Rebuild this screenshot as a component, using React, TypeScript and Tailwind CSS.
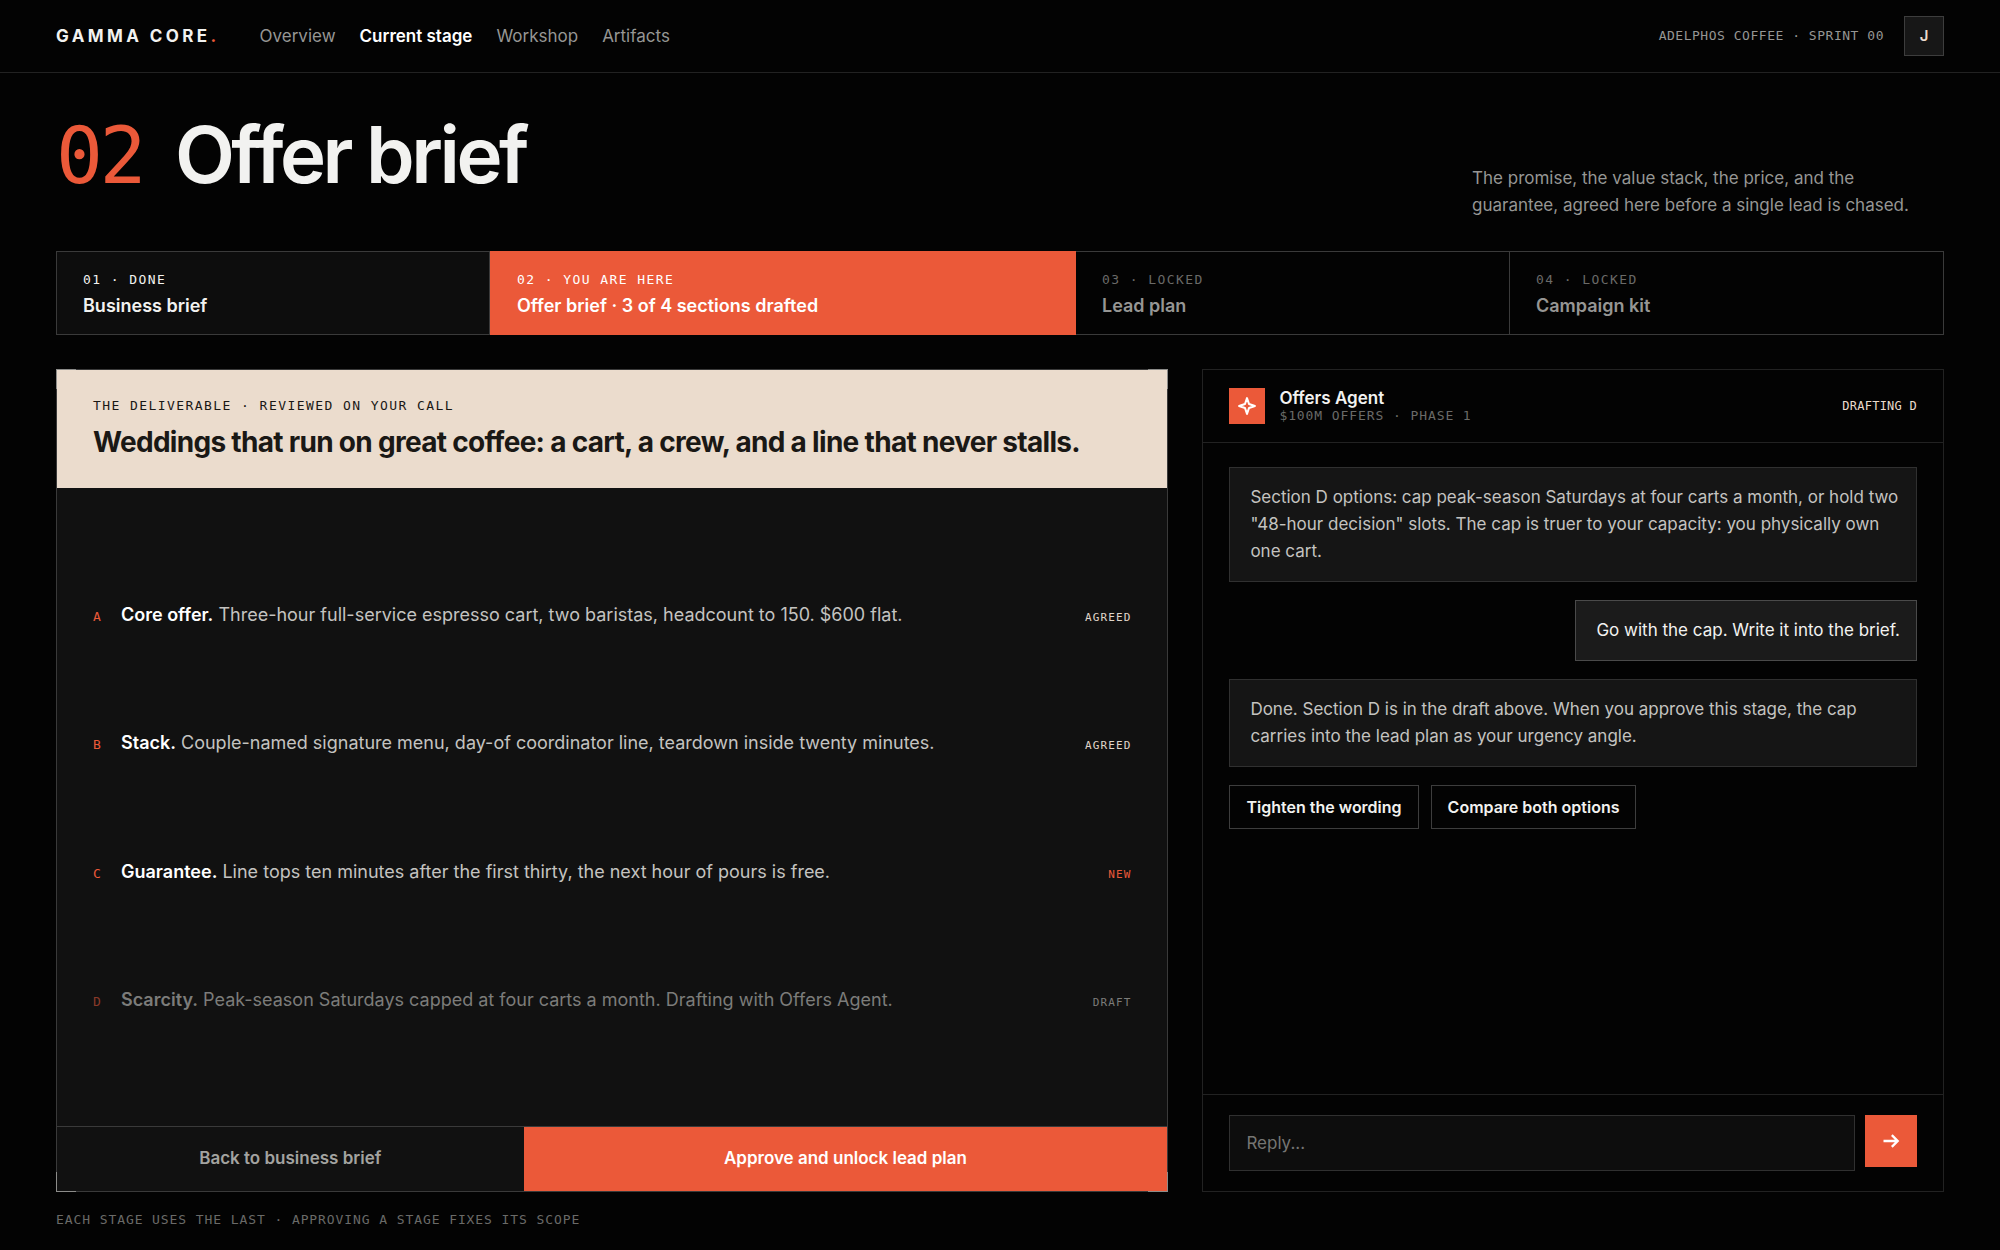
import React, { useState } from 'react';

const MONO = "font-['DejaVu_Sans_Mono',monospace]";

type Stage = {
    label: string;
    title: string;
    state: 'done' | 'current' | 'locked';
};

type Section = {
    letter: string;
    name: string;
    text: string;
    status: 'Agreed' | 'New' | 'Draft';
};

const navLinks = ['Overview', 'Current stage', 'Workshop', 'Artifacts'];

const stages: Stage[] = [
    { label: '01 · DONE', title: 'Business brief', state: 'done' },
    { label: '02 · YOU ARE HERE', title: 'Offer brief · 3 of 4 sections drafted', state: 'current' },
    { label: '03 · LOCKED', title: 'Lead plan', state: 'locked' },
    { label: '04 · LOCKED', title: 'Campaign kit', state: 'locked' },
];

const sections: Section[] = [
    { letter: 'A', name: 'Core offer.', text: 'Three-hour full-service espresso cart, two baristas, headcount to 150. $600 flat.', status: 'Agreed' },
    { letter: 'B', name: 'Stack.', text: 'Couple-named signature menu, day-of coordinator line, teardown inside twenty minutes.', status: 'Agreed' },
    { letter: 'C', name: 'Guarantee.', text: 'Line tops ten minutes after the first thirty, the next hour of pours is free.', status: 'New' },
    { letter: 'D', name: 'Scarcity.', text: 'Peak-season Saturdays capped at four carts a month. Drafting with Offers Agent.', status: 'Draft' },
];

const messages = [
    { from: 'agent', text: 'Section D options: cap peak-season Saturdays at four carts a month, or hold two "48-hour decision" slots. The cap is truer to your capacity: you physically own one cart.' },
    { from: 'user', text: 'Go with the cap. Write it into the brief.' },
    { from: 'agent', text: 'Done. Section D is in the draft above. When you approve this stage, the cap carries into the lead plan as your urgency angle.' },
];

const stageStyles = {
    done: 'bg-[#0d0d0d] text-[#f2f2f0] border-[#3a3a3a]',
    current: 'bg-[#eb5939] text-white border-[#eb5939]',
    locked: 'text-[#969694] border-[#3a3a3a] border-l-0',
};

const statusStyles = {
    Agreed: 'text-[#e0d6ca]',
    New: 'text-[#eb5939]',
    Draft: 'text-[#7c7c7a]',
};

const Header: React.FC = () => (
    <header className="flex items-center justify-between border-b border-[#222222] px-14 py-4">
        <div className="flex items-center gap-10">
            <a href="#home" className="text-[17px] leading-6 font-bold tracking-[0.2em]">
                GAMMA CORE<span className="text-[#eb5939]">.</span>
            </a>
            <nav className="flex gap-6 text-[17px] leading-6">
                {navLinks.map((link) => (
                    <a
                        key={link}
                        href="#nav"
                        className={link === 'Current stage' ? 'font-semibold text-white' : 'text-[#969694]'}
                    >
                        {link}
                    </a>
                ))}
            </nav>
        </div>
        <div className="flex items-center gap-5">
            <span className={`${MONO} text-[13px] tracking-[0.04em] text-[#969694]`}>ADELPHOS COFFEE · SPRINT 00</span>
            <button type="button" className="flex size-10 items-center justify-center border border-[#3d3d3d] bg-[#171717] text-[15px] font-semibold text-[#ebdccd]">
                J
            </button>
        </div>
    </header>
);

const StageStrip: React.FC = () => (
    <ol className="grid grid-cols-[1fr_1.35fr_1fr_1fr]">
        {stages.map((stage) => (
            <li key={stage.title} className={`border px-6.5 pt-4.5 pb-4 ${stageStyles[stage.state]}`}>
                <p className={`${MONO} text-[13px] leading-5 tracking-[0.11em] ${stage.state === 'locked' ? 'text-[#6a6a68]' : ''}`}>{stage.label}</p>
                <p className="mt-1 text-lg leading-6 font-semibold">{stage.title}</p>
            </li>
        ))}
    </ol>
);

const DeliverableCard: React.FC = () => (
    <section className="relative flex flex-col border border-[#3a3a3a] bg-[#111111]">
        {/* corner ticks */}
        <i className="absolute -top-px -left-px size-5 border-t border-l border-[#8c8c8a]" />
        <i className="absolute -top-px -right-px size-5 border-t border-r border-[#8c8c8a]" />
        <i className="absolute -bottom-px -left-px size-5 border-b border-l border-[#8c8c8a]" />
        <i className="absolute -right-px -bottom-px size-5 border-r border-b border-[#8c8c8a]" />

        <div className="bg-[#ebdccd] px-9 pt-6.5 pb-7 text-[#1a1815]">
            <p className={`${MONO} text-[13px] leading-5 tracking-[0.11em]`}>THE DELIVERABLE · REVIEWED ON YOUR CALL</p>
            <h2 className="mt-2 text-[28px] leading-9 font-bold tracking-tight">
                Weddings that run on great coffee: a cart, a crew, and a line that never stalls.
            </h2>
        </div>

        <ul className="flex flex-1 flex-col px-9 pt-16 pb-15">
            {sections.map((section) => (
                <li
                    key={section.letter}
                    className="flex flex-1 items-center"
                >
                    <div className="flex w-full items-baseline text-lg leading-7">
                        <span className={`${MONO} w-7 text-[13px] ${section.status === 'Draft' ? 'text-[#8a3a29]' : 'text-[#eb5939]'}`}>{section.letter}</span>
                        <p className={`flex-1 ${section.status === 'Draft' ? 'text-[#7c7c7a]' : 'text-[#c4c3c0]'}`}>
                            <strong className={`font-semibold ${section.status === 'Draft' ? '' : 'text-white'}`}>{section.name}</strong> {section.text}
                        </p>
                        <span className={`${MONO} text-[11px] tracking-[0.1em] uppercase ${statusStyles[section.status]}`}>{section.status}</span>
                    </div>
                </li>
            ))}
        </ul>

        <div className="grid grid-cols-[1fr_1.38fr] border-t border-[#3a3a3a] text-[17px] font-semibold">
            <button type="button" className="h-16 text-[#a3a3a0]">
                Back to business brief
            </button>
            <button type="button" className="h-16 bg-[#eb5939] text-white">
                Approve and unlock lead plan
            </button>
        </div>
    </section>
);

const AgentPanel: React.FC = () => {
    const [reply, setReply] = useState('');

    return (
        <section className="flex flex-col border border-[#222222]">
            <div className="flex items-center gap-3.5 border-b border-[#222222] px-6.5 py-4.5">
                <span className="flex size-9 items-center justify-center bg-[#eb5939]">
                    <svg viewBox="0 0 24 24" className="size-5" fill="none" stroke="white" strokeWidth="2.4" strokeLinejoin="round">
                        <path d="M12 2.5 L14.4 9.6 L21.5 12 L14.4 14.4 L12 21.5 L9.6 14.4 L2.5 12 L9.6 9.6 Z" />
                    </svg>
                </span>
                <div className="flex-1">
                    <h3 className="text-[17px] leading-5 font-semibold">Offers Agent</h3>
                    <p className={`${MONO} text-[13px] leading-4 tracking-[0.07em] text-[#6a6a68]`}>$100M OFFERS · PHASE 1</p>
                </div>
                <span className={`${MONO} text-[12px] tracking-[0.02em] text-[#ebdccd]`}>DRAFTING D</span>
            </div>

            <div className="flex flex-1 flex-col gap-4.5 px-6.5 pt-6 pb-5">
                {messages.map((message) => (
                    <p
                        key={message.text}
                        className={
                            message.from === 'user'
                                ? 'self-end border border-[#4a4a4a] bg-[#1b1b1b] py-4 pr-4 pl-5 text-[17px] leading-[27px] text-[#f2f2f0]'
                                : 'border border-[#303030] bg-[#151515] py-4 pr-4 pl-5 text-[17px] leading-[27px] text-[#c4c3c0]'
                        }
                    >
                        {message.text}
                    </p>
                ))}
                <div className="flex gap-3">
                    <button type="button" className="h-11 border border-[#3d3d3d] px-4 text-base font-semibold">
                        Tighten the wording
                    </button>
                    <button type="button" className="h-11 border border-[#3d3d3d] px-4 text-base font-semibold">
                        Compare both options
                    </button>
                </div>
            </div>

            <form className="flex items-start gap-2.5 border-t border-[#222222] px-6.5 py-5" onSubmit={(e) => e.preventDefault()}>
                <input
                    type="text"
                    aria-label="Reply"
                    placeholder="Reply..."
                    value={reply}
                    onChange={(e) => setReply(e.target.value)}
                    className="h-14 flex-1 border border-[#303030] bg-[#0d0d0d] px-4 text-[17px] outline-none placeholder:text-[#757573]"
                />
                <button type="submit" aria-label="Send" className="flex size-13 items-center justify-center bg-[#eb5939]">
                    <svg viewBox="0 0 24 24" className="size-5" fill="none" stroke="white" strokeWidth="2.8">
                        <path d="M3 12h16M13 5l7 7-7 7" />
                    </svg>
                </button>
            </form>
        </section>
    );
};

const App: React.FC = () => {
    return (
        <div className="flex min-h-screen flex-col bg-[#030303] font-['Inter',sans-serif] text-[#f2f2f0]">
            <Header />
            <main className="flex flex-1 flex-col px-14 pb-5">
                <div className="flex items-end justify-between pt-8.5">
                    <h1 className="flex items-baseline gap-8 pb-[15px] text-[78px] leading-24 font-semibold tracking-[-0.045em]">
                        <span className={`${MONO} font-normal text-[#eb5939]`}>02</span>
                        Offer brief
                    </h1>
                    <p className="w-[472px] text-[17px] leading-[27px] text-[#969694]">
                        The promise, the value stack, the price, and the guarantee, agreed here before a single lead is chased.
                    </p>
                </div>
                <div className="mt-8">
                    <StageStrip />
                </div>
                <div className="mt-8.5 grid flex-1 grid-cols-[1.5fr_1fr] gap-8.5">
                    <DeliverableCard />
                    <AgentPanel />
                </div>
                <p className={`${MONO} mt-4.5 text-[13px] leading-5 tracking-[0.07em] text-[#6a6a68]`}>
                    EACH STAGE USES THE LAST · APPROVING A STAGE FIXES ITS SCOPE
                </p>
            </main>
        </div>
    );
};

export default App;
